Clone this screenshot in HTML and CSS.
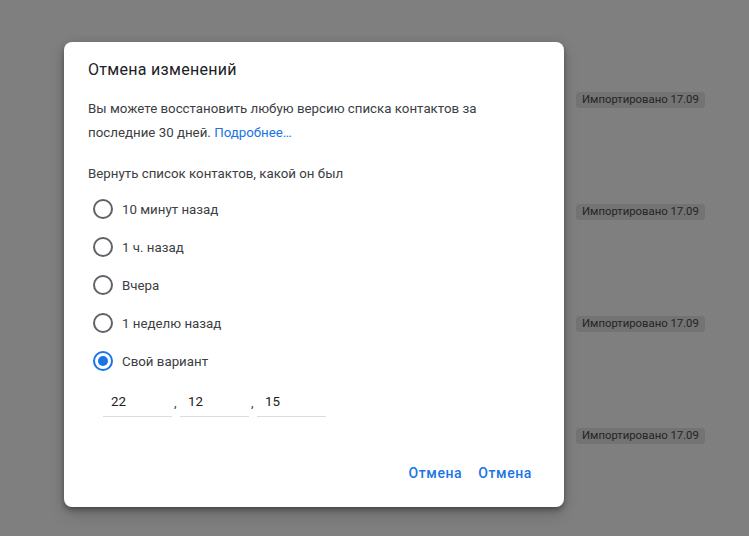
FILE: index.html
```html
<!DOCTYPE html>
<html lang="ru">
<head>
<meta charset="utf-8">
<title>Отмена изменений</title>
<link rel="stylesheet" href="styles.css">
</head>
<body>
<div class="page">
  <div class="list">
    <div class="row"><span class="chip">Импортировано 17.09</span></div>
    <div class="row"><span class="chip">Импортировано 17.09</span></div>
    <div class="row"><span class="chip">Импортировано 17.09</span></div>
    <div class="row"><span class="chip">Импортировано 17.09</span></div>
  </div>
</div>
<div class="scrim"></div>
<div class="dialog">
  <h2 class="title">Отмена изменений</h2>
  <p class="desc">Вы можете восстановить любую версию списка контактов за последние 30 дней. <a class="link" href="#">Подробнее…</a></p>
  <p class="label">Вернуть список контактов, какой он был</p>
  <div class="options">
    <label class="option"><span class="radio"></span><span>10 минут назад</span></label>
    <label class="option"><span class="radio"></span><span>1 ч. назад</span></label>
    <label class="option"><span class="radio"></span><span>Вчера</span></label>
    <label class="option"><span class="radio"></span><span>1 неделю назад</span></label>
    <label class="option"><span class="radio checked"></span><span>Свой вариант</span></label>
  </div>
  <div class="fields">
    <div class="field">22</div>
    <span class="sep">,</span>
    <div class="field">12</div>
    <span class="sep">,</span>
    <div class="field">15</div>
  </div>
  <div class="actions">
    <button class="btn">Отмена</button>
    <button class="btn">Отмена</button>
  </div>
</div>
</body>
</html>
```
FILE: styles.css
```css
html, body {
  margin: 0;
  padding: 0;
}
body {
  width: 749px;
  height: 536px;
  overflow: hidden;
  background: #ffffff;
  font-family: Roboto, "Liberation Sans", Arial, sans-serif;
  position: relative;
}
.page {
  padding-top: 44px;
}
.list {
  display: flex;
  flex-direction: column;
}
.row {
  height: 112px;
  display: flex;
  align-items: center;
  padding-left: 576px;
  box-sizing: border-box;
}
.chip {
  display: inline-flex;
  align-items: center;
  height: 16px;
  padding: 0 6px;
  border-radius: 4px;
  background: #e6e6e6;
  color: #4a4a4a;
  font-size: 11.3px;
  line-height: 16px;
}
.scrim {
  position: absolute;
  inset: 0;
  background: rgba(0, 0, 0, 0.5);
}
.dialog {
  position: absolute;
  left: 64px;
  top: 42px;
  width: 500px;
  height: 465px;
  box-sizing: border-box;
  background: #ffffff;
  border-radius: 8px;
  box-shadow: 0 4px 5px 0 rgba(0,0,0,.14), 0 1px 10px 0 rgba(0,0,0,.12), 0 2px 4px -1px rgba(0,0,0,.2), 0 8px 16px rgba(0,0,0,.15);
  padding: 16px 24px 16px 24px;
  display: flex;
  flex-direction: column;
  color: #3c4043;
}
.title {
  margin: 0;
  font-size: 16px;
  font-weight: 400;
  line-height: 24px;
  color: #202124;
  letter-spacing: 0.3px;
}
.desc {
  margin: 15px 0 0 0;
  font-size: 13.3px;
  line-height: 24px;
  padding-right: 40px;
}
.link {
  color: #1a73e8;
  text-decoration: none;
}
.label {
  margin: 17px 0 0 0;
  font-size: 13.3px;
  line-height: 24px;
}
.options {
  margin-top: 4px;
  display: flex;
  flex-direction: column;
}
.option {
  height: 38px;
  display: flex;
  align-items: center;
  gap: 9px;
  font-size: 13.3px;
  color: #3c4043;
}
.radio {
  width: 20px;
  height: 20px;
  margin-left: 5px;
  box-sizing: border-box;
  border: 2px solid #5f6368;
  border-radius: 50%;
  display: flex;
  align-items: center;
  justify-content: center;
}
.radio.checked {
  border-color: #1a73e8;
}
.radio.checked::after {
  content: "";
  width: 10px;
  height: 10px;
  border-radius: 50%;
  background: #1a73e8;
}
.fields {
  margin-top: 8px;
  margin-left: 15px;
  display: flex;
  align-items: flex-end;
}
.field {
  width: 69px;
  height: 29px;
  box-sizing: border-box;
  padding: 0 8px;
  border-bottom: 1px solid #dadce0;
  font-size: 13.3px;
  line-height: 28px;
  color: #202124;
}
.sep {
  width: 8px;
  padding-left: 2px;
  box-sizing: border-box;
  font-size: 13.3px;
  line-height: 20px;
  color: #3c4043;
  padding-bottom: 4px;
}
.actions {
  margin-top: auto;
  display: flex;
  justify-content: flex-end;
}
.btn {
  height: 36px;
  padding: 0 8px;
  border: 0;
  background: transparent;
  color: #1a73e8;
  font-family: Roboto, "Liberation Sans", Arial, sans-serif;
  font-size: 14px;
  font-weight: 500;
  letter-spacing: 0.6px;
  border-radius: 4px;
}
```
